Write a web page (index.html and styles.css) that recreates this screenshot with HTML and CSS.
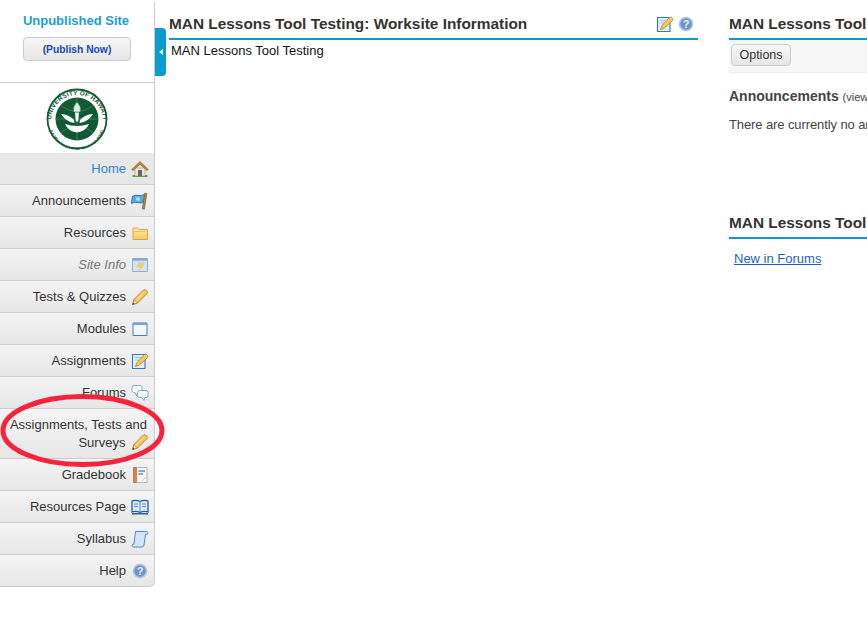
FILE: index.html
```html
<!DOCTYPE html>
<html lang="en">
<head>
<meta charset="utf-8">
<title>MAN Lessons Tool Testing</title>
<link rel="stylesheet" href="styles.css">
</head>
<body>
<div class="page">
  <aside class="sidebar">
    <div class="publish">
      <div class="publish-title">Unpublished Site</div>
      <button class="publish-btn">(Publish Now)</button>
    </div>
    <div class="logo">
      <svg width="62" height="62" viewBox="0 0 62 62">
        <defs>
          <path id="seal-top" d="M5 33A26 26 0 0 1 57 33"/>
          <path id="seal-bottom" d="M3 34A28 28 0 0 0 59 34"/>
        </defs>
        <circle cx="31" cy="31" r="29.500" fill="#fff" stroke="#0f5a34" stroke-width="1.800"/>
        <circle cx="31" cy="31" r="21.500" fill="#0f5a34"/>
        <text class="seal-text"><textPath href="#seal-top" startOffset="50%" text-anchor="middle">UNIVERSITY OF HAWAI‘I</textPath></text>
        <text class="seal-small"><textPath href="#seal-bottom" startOffset="50%" text-anchor="middle">KA MAU KA EA O KA ‘ĀINA I KA PONO</textPath></text>
        <path d="M10 31h42M31 10v42M15 18q16 11 32 0M15 44q16-11 32 0" fill="none" stroke="#5a9475" stroke-width=".6"/>
        <path d="M27.500 24q-1-6 3.500-10q4.500 4 3.500 10z" fill="#dfece4" stroke="#0f5a34" stroke-width=".5"/>
        <path d="M29 24.500h4l-.8 9h-2.400z" fill="#fff"/>
        <path d="M15 26q8 .5 13 6l.5 3q-9-1.500-13.500-9zM47 26q-8 .5-13 6l-.5 3q9-1.500 13.500-9z" fill="#fff"/>
        <path d="M19 36q12 4 24 0q-3 7-12 8.500q-9-1.500-12-8.500z" fill="#fff"/>
      </svg>
    </div>
    <nav class="menu">
      <a class="item item-active">Home
        <svg class="ico" viewBox="0 0 18 18"><path d="M1.500 15h15v2h-15z" fill="#5f9e3c"/><path d="M4 8h10v8H4z" fill="#efe6d2" stroke="#a58a5c" stroke-width=".5"/><path d="M.6 9.500 9 1.400l8.400 8.100-1.600 1L9 4.400 2.200 10.500z" fill="#bb8440" stroke="#8a5a24" stroke-width=".5"/><path d="M7 10h4v6H7z" fill="#63686c"/></svg>
      </a>
      <a class="item">Announcements
        <svg class="ico" viewBox="0 0 18 18"><path d="M1.500 4.500q3-2 6-1t6.500-1.500l-1.500 8q-3 1.500-5.800.5T.2 11.500z" fill="#5aa9ea" stroke="#2168b4" stroke-width=".9"/><path d="M5.500 5l3.500.7-.6 3.300-3.500-.7z" fill="#bfe0fa"/><path d="M13.800 1.200l2 .4-2.500 15.600-2-.4z" fill="#c08a3e" stroke="#7d5520" stroke-width=".7"/></svg>
      </a>
      <a class="item">Resources
        <svg class="ico" viewBox="0 0 18 18"><defs><linearGradient id="folder" x1="0" y1="0" x2="0" y2="1"><stop offset="0" stop-color="#fdeeb4"/><stop offset="1" stop-color="#f7c95a"/></linearGradient></defs><path d="M2 4h5l1 1.500h8.500V15.500H2z" fill="url(#folder)" stroke="#e2a240"/><path d="M3 7.500h12.500" stroke="#e2b04c" stroke-width=".7"/></svg>
      </a>
      <a class="item item-muted">Site Info
        <svg class="ico" viewBox="0 0 18 18"><path d="M1.500 2.500h15v13h-15z" fill="#d5e3f6" stroke="#8fb0dc"/><path d="M1.500 2.500h15v2.200h-15z" fill="#7fa8dc"/><path d="M7 6.500h7l-2.500 3h2L7 16l1.500-4.500H5.500z" fill="#e9cf7c"/></svg>
      </a>
      <a class="item">Tests &amp; Quizzes
        <svg class="ico" viewBox="0 0 18 18"><path d="M1.500 16.500l1.500-5L12.500 2q1-.8 2 0l1.500 1.500q.8 1 0 2L6.500 15z" fill="#f6cc58" stroke="#b9761d" stroke-width=".9"/><path d="M4.500 12.500l8.500-8.500" stroke="#fbe9a6"/><path d="M1.500 16.500l1.500-5 3.500 3.500z" fill="#f3dcb2" stroke="#a96d22" stroke-width=".6"/><path d="M1.500 16.500l.6-2 1.400 1.400z" fill="#3a2a18"/></svg>
      </a>
      <a class="item">Modules
        <svg class="ico" viewBox="0 0 18 18"><path d="M2 3h14v12.500H2z" fill="#f4f8fd" stroke="#3f7fc8"/><path d="M2 3h14v2H2z" fill="#6fa3de"/></svg>
      </a>
      <a class="item">Assignments
        <svg class="ico" viewBox="0 0 18 18"><path d="M1.500 2.500h12.500v14H1.500z" fill="#e2eefb" stroke="#2f7ac6" stroke-width="1.100"/><path d="M4 5.500h6M4 8h4" stroke="#9fc2e8"/><path d="M4.500 14.500l1.500-4 7.500-8q1-.8 2 0l1 1q.8 1 0 2L8.500 13z" fill="#f6cc58" stroke="#b9761d" stroke-width=".8"/></svg>
      </a>
      <a class="item">Forums
        <svg class="ico" viewBox="0 0 18 18"><path d="M1 3.500q0-2 2-2h6q2 0 2 2v3q0 2-2 2H6.500L5.500 12 4 8.500H3q-2 0-2-2z" fill="#fff" stroke="#6f9fd6" stroke-width=".9"/><path d="M6.500 8.500q0-2 2-2H15q2 0 2 2v3q0 2-2 2h-1.200l-.8 3-2.200-3H8.500q-2 0-2-2z" fill="#f2f7fc" stroke="#6f9fd6" stroke-width=".9"/></svg>
      </a>
      <a class="item item-tall">Assignments, Tests and Surveys <svg class="ico ico-inline" viewBox="0 0 18 18"><path d="M1.500 16.500l1.500-5L12.500 2q1-.8 2 0l1.500 1.500q.8 1 0 2L6.500 15z" fill="#f6cc58" stroke="#b9761d" stroke-width=".9"/><path d="M4.500 12.500l8.500-8.500" stroke="#fbe9a6"/><path d="M1.500 16.500l1.500-5 3.500 3.500z" fill="#f3dcb2" stroke="#a96d22" stroke-width=".6"/><path d="M1.500 16.500l.6-2 1.400 1.400z" fill="#3a2a18"/></svg></a>
      <a class="item">Gradebook
        <svg class="ico" viewBox="0 0 18 18"><path d="M3 1.500h13v15H3z" fill="#f6f6f2" stroke="#a9a9a0" stroke-width=".8"/><path d="M2.500 1.500h3v15h-3z" fill="#d98342" stroke="#a5531f" stroke-width=".5"/><path d="M7.500 5h6.500M7.500 8h4.500" stroke="#5d8fd0" stroke-width="1.300"/><path d="M11 15l4-4" stroke="#c4c4bc"/></svg>
      </a>
      <a class="item">Resources Page
        <svg class="ico" viewBox="0 0 18 18"><path d="M1 3q4-1.500 8 .5q4-2 8-.5v11q-4-1.500-8 .5q-4-2-8-.5z" fill="#dcebf8" stroke="#1f5d99" stroke-width="1.300"/><path d="M9 3.500V15M3 6h4M3 8.500h4M11 6h4M11 8.500h4" stroke="#2f73b5" stroke-width=".8"/><path d="M1 15.800h16" stroke="#174a7c" stroke-width="1.300"/></svg>
      </a>
      <a class="item">Syllabus
        <svg class="ico" viewBox="0 0 18 18"><path d="M4.500 1.500h11q1.500 0 1.500 1.500t-2.500 1.500L13 15q-.5 2-2 2H2.500q-1.500 0-1.500-1.500T3 14z" fill="#d4e5f8" stroke="#4f8ed2"/></svg>
      </a>
      <a class="item item-last">Help
        <svg class="ico" viewBox="0 0 18 18"><circle cx="9" cy="9" r="6.500" fill="#6d92cd" stroke="#aec5e8" stroke-width="1.600"/><text class="ico-q" x="9" y="12.800" text-anchor="middle">?</text></svg>
      </a>
    </nav>
  </aside>
  <button class="collapse" aria-label="Collapse"><span class="collapse-arrow"></span></button>

  <main class="content">
    <section class="col-left">
      <header class="portlet-head">
        <h2 class="portlet-title">MAN Lessons Tool Testing: Worksite Information</h2>
        <div class="head-icons">
          <svg class="ico" viewBox="0 0 18 18"><path d="M1.500 2.500h12.500v14H1.500z" fill="#e2eefb" stroke="#2f7ac6" stroke-width="1.100"/><path d="M4 5.500h6M4 8h4" stroke="#9fc2e8"/><path d="M4.500 14.500l1.500-4 7.500-8q1-.8 2 0l1 1q.8 1 0 2L8.500 13z" fill="#f6cc58" stroke="#b9761d" stroke-width=".8"/></svg>
          <svg class="ico" viewBox="0 0 18 18"><circle cx="9" cy="9" r="6.500" fill="#6d92cd" stroke="#aec5e8" stroke-width="1.600"/><text class="ico-q" x="9" y="12.800" text-anchor="middle">?</text></svg>
        </div>
      </header>
      <p class="site-desc">MAN Lessons Tool Testing</p>
    </section>

    <section class="col-right">
      <div class="block-one">
        <header class="portlet-head">
          <h2 class="portlet-title">MAN Lessons Tool Testing: Announcements</h2>
        </header>
        <div class="toolbar"><button class="options-btn">Options</button></div>
        <h3 class="ann-title">Announcements <span class="ann-view">(viewing announcements from the last 10 days)</span></h3>
        <p class="ann-text">There are currently no announcements at this location.</p>
      </div>
      <div class="block-two">
        <header class="portlet-head">
          <h2 class="portlet-title">MAN Lessons Tool Testing: Forums</h2>
        </header>
        <a class="forum-link" href="#">New in Forums</a>
      </div>
    </section>
  </main>

  <svg class="annotation" width="170" height="80" viewBox="0 0 170 80">
    <ellipse cx="82.500" cy="36.500" rx="79.500" ry="34" fill="none" stroke="#f5233b" stroke-width="5"/>
  </svg>
</div>
</body>
</html>
```

FILE: styles.css
```css
* { box-sizing: border-box; }
html, body { margin: 0; height: 100%; overflow: hidden; background: #fff; }
body { font-family: "Liberation Sans", Arial, sans-serif; font-size: 13px; color: #333; }
.page { position: relative; display: flex; width: 867px; height: 618px; overflow: hidden; border-top: 2px solid #fff; }
.page::before { content: ""; position: absolute; top: -1px; left: 0; right: 0; height: 1px; background: #0c6689; }

.sidebar { flex: none; width: 155px; border-right: 1px solid #ccc; height: 585px; border-bottom-right-radius: 5px; }
.publish { height: 81px; padding-top: 11px; border-bottom: 1px solid #ccc; text-align: center; }
.publish-title { margin-left: -2px; font-size: 13px; font-weight: bold; color: #1a9fd5; line-height: 15px; margin-bottom: 9px; }
.publish-btn { width: 108px; height: 24px; padding: 0; border: 1px solid #ccc; border-radius: 4px; background: linear-gradient(#f7f7f7, #e6e6e6); font: bold 10.300px "Liberation Sans", Arial, sans-serif; color: #2146b8; }
.logo { height: 70px; display: flex; justify-content: center; align-items: center; padding-top: 2px; }
.logo svg { display: block; }
.seal-text { font: bold 6.300px "Liberation Sans", Arial, sans-serif; fill: #0f5a34; letter-spacing: .2px; }
.seal-small { font: bold 3.800px "Liberation Sans", Arial, sans-serif; fill: #0f5a34; }

.menu { display: flex; flex-direction: column; }
.item { display: flex; justify-content: flex-end; align-items: center; gap: 5px; height: 32px; padding-right: 5px; border-bottom: 1px solid #ccc; background: linear-gradient(#f4f4f4, #e7e7e7); color: #333; font-size: 13px; text-align: right; }
.item-active { color: #2a87c4; background: linear-gradient(#e9e9e9, #e6e6e6); }
.item-muted { color: #777; font-style: italic; }
.item-tall { display: block; height: 50px; padding: 7px 7px 0 0; line-height: 18px; }
.item-last { border-radius: 0 0 5px 0; }
.ico { display: block; flex: none; width: 18px; height: 18px; }
.ico-inline { display: inline-block; vertical-align: 0; margin: -4px -2px -4px 2px; }
.ico-q { font: bold 11px "Liberation Sans", Arial, sans-serif; fill: #eef3fb; }

.collapse { position: absolute; left: 155px; top: 26px; width: 11px; height: 48px; padding: 0; border: 0; border-radius: 0 4px 4px 0; background: #0a9bd0; display: flex; align-items: center; justify-content: center; }
.collapse-arrow { width: 0; height: 0; border: 3px solid transparent; border-left-width: 0; border-right: 4px solid #fff; }

.content { flex: 1; min-width: 0; display: flex; gap: 31px; padding: 10px 0 0 14px; }
.col-left { flex: none; width: 529px; }
.col-right { flex: none; width: 400px; }
.portlet-head { display: flex; justify-content: space-between; align-items: center; height: 28px; border-bottom: 2px solid #0a9bd0; padding-bottom: 2px; }
.portlet-title { margin: 0; font-size: 15.400px; line-height: 20px; font-weight: bold; color: #333; white-space: nowrap; }
.head-icons { display: flex; gap: 3px; padding-right: 3px; }
.site-desc { margin: 3px 0 0 2px; line-height: 16px; color: #111; font-size: 13px; }

.toolbar { height: 33px; padding: 4px 0 0 2px; background: #f7f7f7; border-bottom: 1px solid #eee; }
.options-btn { width: 60px; height: 22px; padding: 0; border: 1px solid #ccc; border-radius: 4px; background: linear-gradient(#f7f7f7, #e6e6e6); font: 12.500px "Liberation Sans", Arial, sans-serif; color: #333; }
.ann-title { margin: 15px 0 0; font-size: 14px; line-height: 16px; font-weight: bold; color: #444; white-space: nowrap; }
.ann-view { font-size: 11px; font-weight: normal; }
.ann-text { margin: 12px 0 0; line-height: 16px; color: #444; white-space: nowrap; letter-spacing: -.1px; }
.block-one { height: 199px; }
.forum-link { display: block; margin: 12px 0 0 5px; line-height: 16px; font-size: 13px; color: #1a5fd0; text-decoration: underline; }

.annotation { position: absolute; left: 0; top: 392px; }
```
